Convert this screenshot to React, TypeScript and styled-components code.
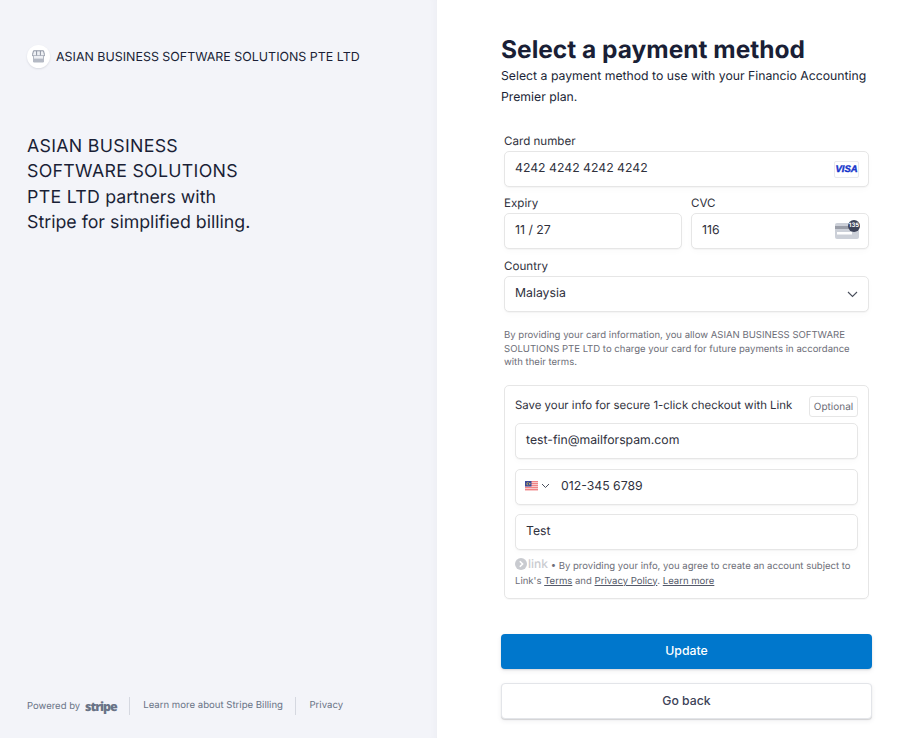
import React from "react";
import styled, { createGlobalStyle } from "styled-components";

const Global = createGlobalStyle`
  html, body { margin: 0; padding: 0; background: #fff; }
  body { font-family: Inter, "Liberation Sans", sans-serif; color: #1a1f36; text-rendering: geometricPrecision; -webkit-font-smoothing: antialiased; }
  * { box-sizing: border-box; }
`;

const Page = styled.div`
  display: flex;
  width: 905px;
  height: 738px;
  overflow: hidden;
`;
const Side = styled.aside`
  width: 437px;
  height: 738px;
  flex: none;
  background: #f3f4f9;
  padding: 45px 27px 0;
  display: flex;
  flex-direction: column;
  box-shadow: inset -8px 0 8px -8px rgba(60, 66, 87, 0.05);
`;
const Brand = styled.div`
  display: flex;
  align-items: center;
  gap: 6px;
  height: 23px;
`;
const BrandIcon = styled.div`
  width: 23px;
  height: 23px;
  border-radius: 50%;
  background: #fff;
  box-shadow: 0 1px 2px rgba(60, 66, 87, 0.14);
  display: flex;
  align-items: center;
  justify-content: center;
`;
const BrandName = styled.span`
  font-size: 12.45px;
  line-height: 23px;
  padding-top: 1px;
  color: #1a1f36;
`;
const Pitch = styled.h2`
  margin: 65.5px 0 0;
  width: 235px;
  font-size: 17.75px;
  line-height: 25.5px;
  font-weight: 400;
  color: #1a1f36;
`;
const Upper = styled.span`
  letter-spacing: 0.3px;
`;
const SideFooter = styled.footer`
  margin-top: auto;
  margin-bottom: 22px;
  display: flex;
  align-items: center;
  height: 20px;
  font-size: 9.6px;
  color: #697386;
`;
const Powered = styled.span`
  font-size: 9.5px;
`;
const StripeMark = styled.span`
  font-family: "Open Sans", sans-serif;
  font-size: 12.5px;
  font-weight: 800;
  letter-spacing: -1.05px;
  color: #697386;
  margin-left: 5px;
`;
const FootLink = styled.span`
  padding: 0 0 0 13px;
  margin-left: 12.5px;
  border-left: 1px solid #d5d8e0;
  line-height: 18px;
`;

const Main = styled.main`
  width: 468px;
  padding: 34px 33px 0 64px;
  display: flex;
  flex-direction: column;
`;
const Title = styled.h1`
  margin: 0;
  font-size: 24.5px;
  line-height: 30px;
  font-weight: 700;
  color: #1a1f36;
`;
const Lead = styled.p`
  margin: 1px 0 0;
  font-size: 12.25px;
  line-height: 21px;
  color: #1a1f36;
`;
const Form = styled.form`
  margin: 27px 3px 0;
  display: flex;
  flex-direction: column;
`;
const Label = styled.label`
  display: block;
  font-size: 11.6px;
  line-height: 15px;
  margin-bottom: 2px;
  color: #30313d;
`;
const Field = styled.div<{ $mb?: number }>`
  margin-bottom: ${(p) => p.$mb ?? 9}px;
`;
const Row = styled.div`
  display: grid;
  grid-template-columns: 178px 178px;
  gap: 9px;
`;
const Input = styled.div`
  height: 36px;
  background: #fff;
  border: 1px solid #e6e6e6;
  border-radius: 5px;
  box-shadow: 0 1px 1px rgba(0, 0, 0, 0.03), 0 3px 6px rgba(0, 0, 0, 0.02);
  display: flex;
  align-items: center;
  justify-content: space-between;
  padding: 0 10px 3px;
  font-size: 12.25px;
  color: #30313d;
`;
const Note = styled.p`
  margin: 17px 0 15.5px;
  font-size: 9.55px;
  line-height: 13.5px;
  color: #6d6e78;
`;
const Line = styled.span`
  display: block;
  white-space: nowrap;
`;
const LinkBox = styled.section`
  height: 214px;
  border: 1px solid #e6e6e6;
  border-radius: 5px;
  padding: 10px 10px 0;
  box-shadow: 0 1px 1px rgba(0, 0, 0, 0.03);
  display: flex;
  flex-direction: column;
`;
const LinkHead = styled.div`
  display: flex;
  justify-content: space-between;
  align-items: center;
  height: 21px;
  margin-bottom: 6px;
  font-size: 11.42px;
  color: #30313d;
`;
const HeadText = styled.span`
  padding-bottom: 3px;
`;
const Badge = styled.span`
  width: 49px;
  height: 21px;
  border: 1px solid #e6e6e6;
  border-radius: 3px;
  font-size: 10px;
  line-height: 20px;
  text-align: center;
  color: #6d6e78;
`;
const Stack = styled.div`
  display: flex;
  flex-direction: column;
  gap: 9.5px;
`;
const Phone = styled.span`
  display: flex;
  align-items: center;
  gap: 3px;
  margin: 2px 11px 0 0;
`;
const PhoneInput = styled(Input)`
  justify-content: flex-start;
  padding-left: 9px;
`;
const Legal = styled.p`
  margin: 7px 0 0;
  font-size: 9.55px;
  line-height: 15px;
  color: #6d6e78;
`;
const LinkMark = styled.span`
  display: inline-flex;
  align-items: center;
  gap: 1px;
  vertical-align: -1px;
  font-size: 12px;
  font-weight: 500;
  line-height: 13px;
  color: #c9cbd0;
`;
const U = styled.span`
  text-decoration: underline;
  color: #545969;
`;
const Actions = styled.div`
  margin-top: 35px;
  display: flex;
  flex-direction: column;
  gap: 14px;
`;
const Button = styled.button<{ $primary?: boolean }>`
  height: ${(p) => (p.$primary ? 35 : 36)}px;
  width: 371px;
  padding: 0 0 2px;
  border-radius: 4px;
  font: 500 12.25px Inter, sans-serif;
  cursor: pointer;
  border: ${(p) => (p.$primary ? "none" : "1px solid #e3e5e9")};
  background: ${(p) => (p.$primary ? "#0077cc" : "#fff")};
  color: ${(p) => (p.$primary ? "#fff" : "#3c4257")};
  box-shadow: ${(p) =>
    p.$primary
      ? "0 1px 2px rgba(0,0,0,.12), 0 2px 5px rgba(60,66,87,.08)"
      : "0 1px 1px rgba(0,0,0,.14), 0 2px 5px rgba(60,66,87,.08)"};
`;
const VisaBadge = styled.span`
  width: 25px;
  height: 17px;
  border: 1px solid #e8e9ed;
  border-radius: 2px;
  background: #fff;
  display: flex;
  align-items: center;
  justify-content: center;
  font-family: "Liberation Sans", sans-serif;
  font-weight: 700;
  font-style: italic;
  font-size: 9.5px;
  -webkit-text-stroke: 0.4px #1434cb;
  color: #1434cb;
  margin: 3px -1px 0 0;
`;
const CvcWrap = styled.span`
  position: relative;
  display: block;
  width: 24px;
  height: 18px;
  margin: 3px -1px 0 0;
`;
const CvcBadge = styled.span`
  position: absolute;
  right: -1px;
  top: -2px;
  width: 12px;
  height: 12px;
  border-radius: 50%;
  background: #3c4257;
  color: #fff;
  font-size: 6px;
  font-weight: 700;
  line-height: 12px;
  text-align: center;
`;

const StoreIcon = () => (
  <svg width="13" height="13" viewBox="0 0 13 13" fill="none">
    <path d="M1.5.8h10l.9 3.6v1.4H.6V4.4z" fill="#eef0f4" stroke="#8e95a3" strokeWidth="1" />
    <path d="M4.6.8v5M8.4.8v5" stroke="#8e95a3" strokeWidth="1" />
    <path d="M1.5 5.8v6.2h10V5.8" fill="#eef0f4" stroke="#b4b9c4" strokeWidth="1" />
    <rect x="1.5" y="8.6" width="10" height="3.4" fill="#b4b9c4" />
  </svg>
);
const ChevronSvg = styled.svg`
  margin-top: 3px;
`;
const Chevron = () => (
  <ChevronSvg width="11" height="7" viewBox="0 0 11 7" fill="none">
    <path d="M1 1l4.5 4.5L10 1" stroke="#4a4f5c" strokeWidth="1.1" />
  </ChevronSvg>
);
const SmallChevron = () => (
  <svg width="9" height="6" viewBox="0 0 9 6" fill="none">
    <path d="M1 1l3.5 3.5L8 1" stroke="#4a4f5c" strokeWidth="1" />
  </svg>
);
const CardBack = () => (
  <svg width="24" height="18" viewBox="0 0 24 18">
    <rect y="1" width="24" height="16" rx="2" fill="#ccd0d8" />
    <rect y="4" width="24" height="3" fill="#9a9ea8" />
    <rect x="2" y="10" width="15" height="2.5" fill="#fff" />
  </svg>
);
const MyFlag = () => (
  <svg width="13" height="10" viewBox="0 0 13 10">
    <rect width="13" height="10" fill="#fbe3e3" />
    {[0, 2, 4, 6, 8].map((y) => (
      <rect key={y} y={y + 0.2} width="13" height="1" fill="#ee6b6e" />
    ))}
    <rect width="6.5" height="5.5" fill="#3b4a9a" />
    <circle cx="3" cy="2.7" r="1.5" fill="#f5cf3c" />
    <circle cx="3.5" cy="2.7" r="1.2" fill="#3b4a9a" />
    <circle cx="4.8" cy="2.7" r=".7" fill="#f5cf3c" />
  </svg>
);
const LinkArrow = () => (
  <svg width="12" height="12" viewBox="0 0 12 12">
    <circle cx="6" cy="6" r="6" fill="#c9cbd0" />
    <path d="M4.8 3.2 7.6 6 4.8 8.8" stroke="#fff" strokeWidth="1.6" fill="none" />
  </svg>
);

export default function App() {
  return (
    <Page>
      <Global />
      <Side>
        <Brand>
          <BrandIcon><StoreIcon /></BrandIcon>
          <BrandName>ASIAN BUSINESS SOFTWARE SOLUTIONS PTE LTD</BrandName>
        </Brand>
        <Pitch>
          <Line><Upper>ASIAN BUSINESS</Upper></Line>
          <Line><Upper>SOFTWARE SOLUTIONS</Upper></Line>
          <Line><Upper>PTE LTD</Upper> partners with</Line>
          <Line>Stripe for simplified billing.</Line>
        </Pitch>
        <SideFooter>
          <Powered>Powered by</Powered>
          <StripeMark>stripe</StripeMark>
          <FootLink>Learn more about Stripe Billing</FootLink>
          <FootLink>Privacy</FootLink>
        </SideFooter>
      </Side>
      <Main>
        <Title>Select a payment method</Title>
        <Lead>Select a payment method to use with your Financio Accounting Premier plan.</Lead>
        <Form>
          <Field>
            <Label>Card number</Label>
            <Input>4242 4242 4242 4242<VisaBadge>VISA</VisaBadge></Input>
          </Field>
          <Row>
            <Field $mb={10}>
              <Label>Expiry</Label>
              <Input>11 / 27</Input>
            </Field>
            <Field $mb={10}>
              <Label>CVC</Label>
              <Input>116<CvcWrap><CardBack /><CvcBadge>135</CvcBadge></CvcWrap></Input>
            </Field>
          </Row>
          <Field $mb={0}>
            <Label>Country</Label>
            <Input>Malaysia<Chevron /></Input>
          </Field>
          <Note>
            <Line>By providing your card information, you allow ASIAN BUSINESS SOFTWARE</Line>
            <Line>SOLUTIONS PTE LTD to charge your card for future payments in accordance</Line>
            <Line>with their terms.</Line>
          </Note>
          <LinkBox>
            <LinkHead>
              <HeadText>Save your info for secure 1-click checkout with Link</HeadText>
              <Badge>Optional</Badge>
            </LinkHead>
            <Stack>
              <Input>test-fin@mailforspam.com</Input>
              <PhoneInput>
                <Phone><MyFlag /><SmallChevron /></Phone>
                012-345 6789
              </PhoneInput>
              <Input>Test</Input>
            </Stack>
            <Legal>
              <Line><LinkMark><LinkArrow />link</LinkMark> • By providing your info, you agree to create an account subject to</Line>
              <Line>Link's <U>Terms</U> and <U>Privacy Policy</U>. <U>Learn more</U></Line>
            </Legal>
          </LinkBox>
        </Form>
        <Actions>
          <Button $primary>Update</Button>
          <Button>Go back</Button>
        </Actions>
      </Main>
    </Page>
  );
}
